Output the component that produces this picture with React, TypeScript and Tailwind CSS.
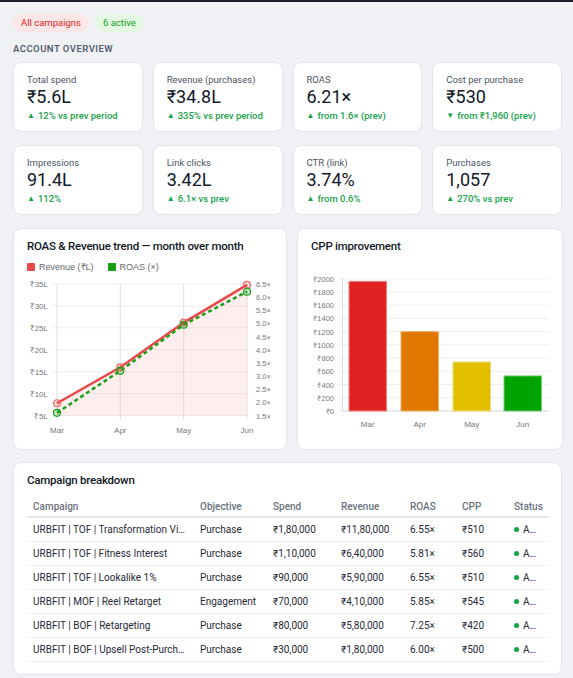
import React from 'react'

const kpis = [
  { label: 'Total spend', value: '₹5.6L', delta: '12% vs prev period', up: true },
  { label: 'Revenue (purchases)', value: '₹34.8L', delta: '335% vs prev period', up: true },
  { label: 'ROAS', value: '6.21×', delta: 'from 1.6× (prev)', up: true },
  { label: 'Cost per purchase', value: '₹530', delta: 'from ₹1,960 (prev)', up: false },
  { label: 'Impressions', value: '91.4L', delta: '112%', up: true },
  { label: 'Link clicks', value: '3.42L', delta: '6.1× vs prev', up: true },
  { label: 'CTR (link)', value: '3.74%', delta: 'from 0.6%', up: true },
  { label: 'Purchases', value: '1,057', delta: '270% vs prev', up: true },
]

const campaigns = [
  ['URBFIT | TOF | Transformation Videos', 'Purchase', '₹1,80,000', '₹11,80,000', '6.55×', '₹510'],
  ['URBFIT | TOF | Fitness Interest', 'Purchase', '₹1,10,000', '₹6,40,000', '5.81×', '₹560'],
  ['URBFIT | TOF | Lookalike 1%', 'Purchase', '₹90,000', '₹5,90,000', '6.55×', '₹510'],
  ['URBFIT | MOF | Reel Retarget', 'Engagement', '₹70,000', '₹4,10,000', '5.85×', '₹545'],
  ['URBFIT | BOF | Retargeting', 'Purchase', '₹80,000', '₹5,80,000', '7.25×', '₹420'],
  ['URBFIT | BOF | Upsell Post-Purchase', 'Purchase', '₹30,000', '₹1,80,000', '6.00×', '₹500'],
]

const months = ['Mar', 'Apr', 'May', 'Jun']

function KpiCard({ label, value, delta, up }: (typeof kpis)[number]) {
  return (
    <div className="rounded-lg border border-[#e3e5ea] bg-white pl-[13px] pr-2 pt-[11px] pb-[9px]">
      <div className="text-[9.5px] leading-[12px] text-[#4b5563]">{label}</div>
      <div className="text-[18px] leading-[22px] text-[#111827]">{value}</div>
      <div className="mt-[2px] flex items-center gap-[3px] text-[9.5px] font-medium leading-[12px] text-[#16a34a]">
        <span className="text-[8px]">{up ? '▲' : '▼'}</span>
        <span>{delta}</span>
      </div>
    </div>
  )
}

function TrendChart() {
  const xs = [30, 93.3, 156.7, 220]
  const rev = [7.8, 16, 26.2, 34.8]
  const roas = [1.6, 3.2, 4.95, 6.21]
  const yRev = (v: number) => 7 + (35 - v) * (131.5 / 30)
  const yRoas = (v: number) => 7 + (6.5 - v) * (131.5 / 5)
  const revPts = xs.map((x, i) => `${x},${yRev(rev[i])}`).join(' ')
  const roasPts = xs.map((x, i) => `${x},${yRoas(roas[i])}`).join(' ')
  const leftTicks = [35, 30, 25, 20, 15, 10, 5]
  const rightTicks = [6.5, 6, 5.5, 5, 4.5, 4, 3.5, 3, 2.5, 2, 1.5]

  return (
    <svg width="246" height="160" className="mt-[3px] block font-['Liberation_Sans',sans-serif]">
      {leftTicks.map((t) => (
        <g key={t}>
          <line x1={25} x2={220} y1={yRev(t)} y2={yRev(t)} stroke="#efefef" strokeWidth={1} />
          <text x={21} y={yRev(t) + 3} textAnchor="end" fontSize="8" fill="#777">
            ₹{t}L
          </text>
        </g>
      ))}
      {rightTicks.map((t) => (
        <text key={t} x={229} y={yRoas(t) + 3} fontSize="7.5" fill="#777">
          {t.toFixed(1)}×
        </text>
      ))}
      {xs.map((x, i) => (
        <g key={x}>
          <line x1={x} x2={x} y1={7} y2={143} stroke="#e2e2e2" strokeWidth={1} />
          <text x={x} y={156} textAnchor="middle" fontSize="8" fill="#777">
            {months[i]}
          </text>
        </g>
      ))}
      <polygon points={`${xs[0]},138.5 ${revPts} ${xs[3]},138.5`} fill="rgba(239,68,68,0.09)" />
      <polyline points={revPts} fill="none" stroke="#e84848" strokeWidth={2.5} />
      <polyline points={roasPts} fill="none" stroke="#16a016" strokeWidth={2.5} strokeDasharray="4 3" />
      {xs.map((x, i) => (
        <circle key={`r${i}`} cx={x} cy={yRev(rev[i])} r={3.5} fill="rgba(239,68,68,0.2)" stroke="#ef6b6b" strokeWidth={1.2} />
      ))}
      {xs.map((x, i) => (
        <circle key={`g${i}`} cx={x} cy={yRoas(roas[i])} r={3.5} fill="rgba(22,160,22,0.2)" stroke="#16a016" strokeWidth={1.2} />
      ))}
    </svg>
  )
}

function CppChart() {
  const y = (v: number) => 140 - v * 0.06615
  const ticks = [2000, 1800, 1600, 1400, 1200, 1000, 800, 600, 400, 200, 0]
  const bars = [
    { x: 38, v: 1960, fill: '#e02222', stroke: '#f08080' },
    { x: 90, v: 1200, fill: '#e07800', stroke: '#f0b060' },
    { x: 142, v: 740, fill: '#e2c000', stroke: '#f0dc70' },
    { x: 193, v: 530, fill: '#00a300', stroke: '#70d070' },
  ]
  return (
    <svg width="238" height="160" className="mt-[18px] block font-['Liberation_Sans',sans-serif]">
      {ticks.map((t) => (
        <g key={t}>
          <line x1={27} x2={238} y1={y(t)} y2={y(t)} stroke="#efefef" strokeWidth={1} />
          <text x={23} y={y(t) + 3} textAnchor="end" fontSize="7.5" fill="#777">
            ₹{t}
          </text>
        </g>
      ))}
      <line x1={31.5} x2={31.5} y1={7.7} y2={140} stroke="#ddd" strokeWidth={1} />
      <line x1={31.5} x2={238} y1={140} y2={140} stroke="#ddd" strokeWidth={1} />
      {bars.map((b, i) => (
        <g key={b.x}>
          <rect x={b.x} y={y(b.v)} width={37.5} height={140 - y(b.v)} fill={b.fill} stroke={b.stroke} strokeWidth={1} />
          <text x={b.x + 18.75} y={156} textAnchor="middle" fontSize="8" fill="#777">
            {months[i]}
          </text>
        </g>
      ))}
    </svg>
  )
}

export default function App() {
  return (
    <div className="min-h-screen border-t-2 border-[#1b1b2b] bg-[#f0f1f5] pl-[13px] pr-[11px] pb-4 font-['Roboto',sans-serif]">
      <div className="flex gap-[6px] pt-3">
        <span className="rounded-full bg-[#fde6e6] px-2 text-[9.5px] leading-[18px] text-[#dc2626]">All campaigns</span>
        <span className="rounded-full bg-[#e3f7e3] px-2 text-[9.5px] leading-[18px] text-[#16a016]">6 active</span>
      </div>

      <h2 className="mt-[11px] text-[9.5px] font-semibold uppercase leading-[12px] tracking-[0.05em] text-[#555e6e]">
        Account overview
      </h2>

      <div className="mt-[7px] grid grid-cols-4 gap-x-[10px] gap-y-[13px]">
        {kpis.map((k) => (
          <KpiCard key={k.label} {...k} />
        ))}
      </div>

      <div className="mt-[13px] grid grid-cols-[274px_1fr] gap-[10px]">
        <div className="rounded-lg border border-[#e3e5ea] bg-white px-[13px] pt-[10px] pb-3">
          <h3 className="whitespace-nowrap text-[11.5px] font-medium leading-[14px] tracking-[-0.02em] text-[#111827]">
            ROAS &amp; Revenue trend — month over month
          </h3>
          <div className="mt-[7px] flex items-center text-[9px] leading-[14px] text-[#666] font-['Liberation_Sans',sans-serif]">
            <span className="mr-[4px] h-[8px] w-[8px] rounded-[1px] bg-[#e84848]" />
            <span className="mr-[14px]">Revenue (₹L)</span>
            <span className="mr-[4px] h-[8px] w-[8px] rounded-[1px] bg-[#16a016]" />
            <span>ROAS (×)</span>
          </div>
          <TrendChart />
        </div>
        <div className="rounded-lg border border-[#e3e5ea] bg-white px-[13px] pt-[10px] pb-3">
          <h3 className="text-[11.5px] font-medium leading-[14px] tracking-[-0.02em] text-[#111827]">CPP improvement</h3>
          <CppChart />
        </div>
      </div>

      <div className="mt-[12px] rounded-lg border border-[#e3e5ea] bg-white pl-[13px] pr-[12px] pt-[10px] pb-3">
        <h3 className="text-[11.5px] font-medium leading-[14px] tracking-[-0.02em] text-[#111827]">Campaign breakdown</h3>
        <table className="mt-[9px] w-full table-fixed text-left text-[10px]">
          <colgroup>
            <col className="w-[167px]" />
            <col className="w-[73px]" />
            <col className="w-[68px]" />
            <col className="w-[69px]" />
            <col className="w-[52px]" />
            <col className="w-[52px]" />
            <col />
          </colgroup>
          <thead>
            <tr className="border-b-2 border-[#e5e7eb] text-[#6b7280]">
              {['Campaign', 'Objective', 'Spend', 'Revenue', 'ROAS', 'CPP', 'Status'].map((h) => (
                <th key={h} className="h-[21px] px-[6px] font-medium">
                  {h}
                </th>
              ))}
            </tr>
          </thead>
          <tbody className="text-[#1f2937]">
            {campaigns.map((row) => (
              <tr key={row[0]} className="border-b border-[#eeeff2]">
                {row.map((cell, i) => (
                  <td key={i} className="h-[24px] truncate px-[6px]">
                    {cell}
                  </td>
                ))}
                <td className="h-[24px] px-[6px]">
                  <div className="flex items-center gap-[4px]">
                    <span className="h-[5px] w-[5px] shrink-0 rounded-full bg-[#16a34a]" />
                    <span className="max-w-[18px] truncate">Active</span>
                  </div>
                </td>
              </tr>
            ))}
          </tbody>
        </table>
      </div>
    </div>
  )
}
